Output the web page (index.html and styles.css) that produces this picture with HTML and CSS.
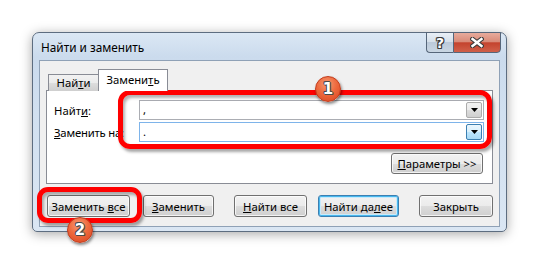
FILE: index.html
```html
<!DOCTYPE html>
<html lang="ru">
<head>
<meta charset="utf-8">
<title>Найти и заменить</title>
<link rel="stylesheet" href="styles.css">
</head>
<body>
<div class="page">
  <div class="window">
    <div class="titlebar">
      <span class="title">Найти и заменить</span>
      <div class="caption">
        <div class="cb help"><span class="glyph">?</span></div>
        <div class="cb close">
          <svg width="14" height="11" viewBox="0 0 14 11"><path d="M2.5 2 L11.5 9 M11.5 2 L2.5 9" stroke="#3a3a3a" stroke-width="4.6" stroke-linecap="square" fill="none"/><path d="M2.5 2 L11.5 9 M11.5 2 L2.5 9" stroke="#fff" stroke-width="2.4" stroke-linecap="square" fill="none"/></svg>
        </div>
      </div>
    </div>
    <div class="client">
      <div class="tabs">
        <div class="tab">Най<u>т</u>и</div>
        <div class="tab active">Замени<u>т</u>ь</div>
      </div>
      <div class="panel">
        <div class="row">
          <label class="lbl">Найт<u>и</u>:</label>
          <div class="combo">
            <span class="val">,</span>
            <span class="dd"><svg width="7" height="4" viewBox="0 0 7 4"><polygon points="0,0 7,0 3.5,4" fill="#000"/></svg></span>
          </div>
        </div>
        <div class="row row2">
          <label class="lbl"><u>З</u>аменить на:</label>
          <div class="combo hover">
            <span class="val">.</span>
            <span class="dd"><svg width="7" height="4" viewBox="0 0 7 4"><polygon points="0,0 7,0 3.5,4" fill="#000"/></svg></span>
          </div>
        </div>
        <div class="params-row">
          <button class="btn params"><u>П</u>араметры &gt;&gt;</button>
        </div>
      </div>
      <div class="buttons">
        <button class="btn b-all">Заменить <u>в</u>се</button>
        <button class="btn b-rep"><u>З</u>аменить</button>
        <button class="btn b-fall"><u>Н</u>айти все</button>
        <button class="btn b-next default">Найти да<u>л</u>ее</button>
        <button class="btn b-close">Закрыть</button>
      </div>
    </div>
  </div>

  <div class="mark mark1"></div>
  <div class="mark mark2"></div>
  <div class="badge badge1">1</div>
  <div class="badge badge2">2</div>
</div>
</body>
</html>
```
FILE: styles.css
```css
html, body {
  margin: 0;
  background: #fff;
}
body {
  font-family: "Noto Sans", "Open Sans", "DejaVu Sans", sans-serif;
  font-size: 11.3px;
  color: #000;
}
.page {
  position: relative;
  width: 540px;
  height: 264px;
  box-sizing: border-box;
  padding: 32px 0 0 32px;
  overflow: hidden;
}
.window {
  width: 475px;
  box-sizing: border-box;
  border: 1px solid #5d6d80;
  border-radius: 7px 7px 5px 5px;
  background: linear-gradient(180deg, #dbe7f4 0%, #cbdbed 12%, #d1e0f0 40%, #dae6f3 100%);
  box-shadow: 0 2px 12px rgba(0, 0, 0, 0.35);
  padding: 0 6px 4px;
}
.titlebar {
  display: flex;
  align-items: center;
  height: 27px;
}
.title {
  flex: 1;
  padding-left: 2px;
  padding-top: 1px;
  font-size: 11.8px;
}
.caption {
  align-self: flex-start;
  display: flex;
  margin-top: -1px;
  margin-right: -1px;
}
.cb {
  box-sizing: border-box;
  height: 21px;
  border: 1px solid #56667a;
  display: flex;
  align-items: center;
  justify-content: center;
}
.help {
  width: 27px;
  border-right: none;
  border-radius: 0 0 0 4px;
  background: linear-gradient(180deg, #e9eff6 0%, #d6e0ea 45%, #bccada 50%, #c9d6e3 100%);
}
.close {
  width: 48px;
  border-radius: 0 0 4px 0;
  background: linear-gradient(180deg, #e7ab9c 0%, #d98b79 45%, #c4432e 52%, #d0604a 100%);
}
.glyph {
  color: #fff;
  font: bold 14px "DejaVu Sans", sans-serif;
  line-height: 14px;
  text-shadow: 1px 0 0 #3a3a3a, -1px 0 0 #3a3a3a, 0 1px 0 #3a3a3a, 0 -1px 0 #3a3a3a, 1px 1px 0 #3a3a3a, -1px -1px 0 #3a3a3a, 1px -1px 0 #3a3a3a, -1px 1px 0 #3a3a3a;
}
.client {
  box-sizing: border-box;
  height: 167px;
  border: 1px solid #8fa1b6;
  background: #f0f0f0;
  padding: 8px 6px 9px;
}
.tabs {
  display: flex;
  align-items: flex-end;
  height: 22px;
  margin-bottom: -1px;
  padding-left: 2px;
  position: relative;
  z-index: 1;
}
.tab {
  box-sizing: border-box;
  height: 17px;
  width: 51px;
  border: 1px solid #898c95;
  border-bottom: none;
  background: linear-gradient(180deg, #f2f2f2 0%, #ebebeb 50%, #dddddd 51%, #cfcfcf 100%);
  text-align: center;
  line-height: 16px;
}
.tab.active {
  height: 22px;
  width: 70px;
  margin-left: -1px;
  background: #fff;
  line-height: 20px;
}
.panel {
  box-sizing: border-box;
  height: 94px;
  border: 1px solid #898c95;
  background: #fff;
  padding: 9px 8px 9px 7px;
}
.row {
  display: flex;
  align-items: center;
  height: 20px;
}
.row2 {
  margin-top: 2px;
}
.lbl {
  width: 85px;
  flex: none;
  white-space: nowrap;
}
.row2 .lbl {
  letter-spacing: -0.2px;
}
.combo {
  flex: 1;
  box-sizing: border-box;
  height: 20px;
  display: flex;
  align-items: stretch;
  border: 1px solid #abadb3;
  background: #fff;
}
.combo.hover {
  border-color: #7eb4ea;
}
.val {
  flex: 1;
  padding-left: 3px;
  line-height: 17px;
}
.dd {
  box-sizing: border-box;
  width: 16px;
  margin: 1px;
  border: 1px solid #acacac;
  border-radius: 2px;
  background: linear-gradient(180deg, #f2f2f2 0%, #ebebeb 50%, #dddddd 51%, #cfcfcf 100%);
  display: flex;
  align-items: center;
  justify-content: center;
}
.hover .dd {
  border-color: #3c7fb1;
  background: linear-gradient(180deg, #eaf6fd 0%, #d9f0fc 50%, #bee6fd 51%, #a7d9f5 100%);
}
.params-row {
  display: flex;
  justify-content: flex-end;
  margin-top: 11px;
  padding-right: 1px;
}
.btn {
  box-sizing: border-box;
  height: 22px;
  padding: 0;
  border: 1px solid #707070;
  border-radius: 3px;
  background: linear-gradient(180deg, #f2f2f2 0%, #ebebeb 50%, #dddddd 51%, #cfcfcf 100%);
  box-shadow: inset 0 0 0 1px rgba(255, 255, 255, 0.75);
  font: inherit;
  color: #000;
  text-align: center;
  line-height: 19px;
  white-space: nowrap;
}
.params {
  width: 92px;
  height: 21px;
}
.buttons {
  display: flex;
  margin-top: 11px;
}
.b-all { width: 83px; margin-left: 1px; }
.b-rep { width: 71px; margin-left: 13px; }
.b-fall { width: 73px; margin-left: 20px; }
.b-next { width: 81px; margin-left: 11px; }
.b-close { width: 74px; margin-left: 20px; }
.btn.default {
  border-color: #3c7fb1;
  box-shadow: inset 0 0 0 1px #48b8ee, inset 0 0 0 2px #c8eafb;
}
.mark {
  position: absolute;
  box-sizing: border-box;
  border: 5px solid #ff0000;
  border-radius: 12px;
  box-shadow: 2px 3px 3px rgba(0, 0, 0, 0.35), inset 2px 3px 3px rgba(0, 0, 0, 0.3);
}
.mark1 {
  left: 118px;
  top: 90px;
  width: 374px;
  height: 59px;
}
.mark2 {
  left: 37px;
  top: 187px;
  width: 105px;
  height: 36px;
  border-radius: 11px;
}
.badge {
  position: absolute;
  width: 26px;
  height: 26px;
  box-sizing: border-box;
  border-radius: 50%;
  border: 1px solid #c23a1a;
  background: radial-gradient(circle at 45% 30%, #f69a74 0%, #ee6a3e 45%, #d9441f 100%);
  box-shadow: 1px 2px 3px rgba(0, 0, 0, 0.45);
  color: #fff;
  font: bold 15px "DejaVu Sans", sans-serif;
  display: flex;
  align-items: center;
  justify-content: center;
  text-shadow: 1px 0 0 #4a4a4a, -1px 0 0 #4a4a4a, 0 1px 0 #4a4a4a, 0 -1px 0 #4a4a4a, 1px 1px 0 #4a4a4a, -1px -1px 0 #4a4a4a;
}
.badge1 {
  left: 315px;
  top: 76px;
}
.badge2 {
  left: 67px;
  top: 217px;
}
```
